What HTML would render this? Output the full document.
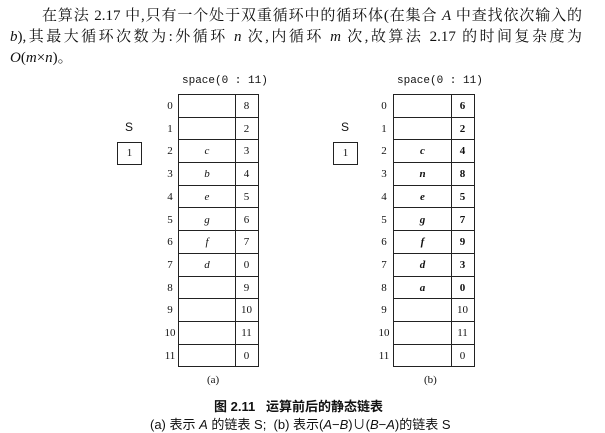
<!DOCTYPE html>
<html><head><meta charset="utf-8"><style>
body{margin:0;width:605px;height:432px;background:#fff;position:relative;overflow:hidden;font-family:"Liberation Serif","Noto Serif CJK SC","Noto Sans CJK SC",serif;color:#111}
.ln{position:absolute;font-size:15px;line-height:18px;text-align:justify;text-align-last:justify;white-space:nowrap}
.a{position:absolute}
i{font-style:italic}
.tb{position:absolute;border:1.3px solid #222;border-bottom:none}
.r{position:absolute;left:0;right:0;height:22.7px;border-bottom:1.3px solid #222;box-sizing:border-box}
.c{position:absolute;top:0;height:22.7px;line-height:22.7px;text-align:center;font-size:11px}
.num{position:absolute;font-size:11px;width:20px;text-align:center;line-height:22.7px}
.sm{font-size:11px}
</style></head><body>
<div class="ln" style="left:42px;top:7px;width:540px">在算法 2.17 中,只有一个处于双重循环中的循环体(在集合 <i>A</i> 中查找依次输入的</div>
<div class="ln" style="left:10px;top:28px;width:572px"><i>b</i>),其最大循环次数为:外循环 <i>n</i> 次,内循环 <i>m</i> 次,故算法 2.17 的时间复杂度为</div>
<div class="ln" style="left:10px;top:49px;text-align-last:left"><i>O</i>(<i>m</i>×<i>n</i>)。</div>

<div id="figs"></div>
<script>
function fig(L,D,R,S,idxX,vals,nums,boldNums){
 let h='<div class="a sm" style="left:'+(L+4)+'px;top:75px;font-family:Liberation Mono,monospace">space(0 : 11)</div>';
 h+='<div class="a" style="left:'+(S+8)+'px;top:120px;font-size:12px;font-family:Liberation Sans,sans-serif">S</div>';
 h+='<div class="a" style="left:'+S+'px;top:142px;width:23px;height:21px;border:1.3px solid #222;text-align:center;line-height:21px;font-size:11px">1</div>';
 let n='';
 h+='<div class="tb" style="left:'+L+'px;top:94px;width:'+(R-L)+'px;height:272px"><div style="position:absolute;left:'+(D-L)+'px;top:0;bottom:0;border-left:1.3px solid #222"></div>';
 for(let i=0;i<12;i++){
  h+='<div class="r" style="top:'+(i*22.7)+'px"><div class="c" style="left:0;width:'+(D-L)+'px;font-style:italic;font-weight:'+(boldNums?'bold':'normal')+'">'+vals[i]+'</div><div class="c" style="left:'+(D-L)+'px;width:'+(R-D)+'px;font-weight:'+(boldNums&&i<9?'bold':'normal')+'">'+nums[i]+'</div></div>';
  n+='<div class="num" style="left:'+(idxX-10)+'px;top:'+(95+i*22.7)+'px">'+i+'</div>';
 }
 h+='</div>'+n;
 return h;
}
document.getElementById('figs').innerHTML=
 fig(178,234,257,117,170,['','','c','b','e','g','f','d','','','',''],[8,2,3,4,5,6,7,0,9,10,11,0],false)+
 fig(393,450,473,333,384,['','','c','n','e','g','f','d','a','','',''],[6,2,4,8,5,7,9,3,0,10,11,0],true);
</script>
<div class="a sm" style="left:207px;top:374px">(a)</div>
<div class="a sm" style="left:424px;top:374px">(b)</div>
<div class="a" style="left:214px;top:396px;font-size:13px;font-family:'Liberation Sans','Noto Sans CJK SC',sans-serif;font-weight:bold">图 2.11&nbsp;&nbsp; 运算前后的静态链表</div>
<div class="a" style="left:150px;top:414px;font-size:13px;font-family:'Liberation Sans','Noto Sans CJK SC',sans-serif;white-space:nowrap">(a) 表示 <i>A</i> 的链表 S; &nbsp;(b) 表示(<i>A</i>−<i>B</i>)∪(<i>B</i>−<i>A</i>)的链表 S</div>
</body></html>
